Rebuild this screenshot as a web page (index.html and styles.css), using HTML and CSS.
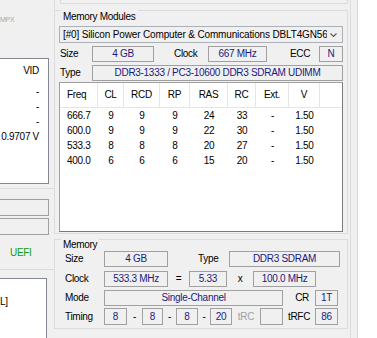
FILE: index.html
```html
<!DOCTYPE html>
<html>
<head>
<meta charset="utf-8">
<link rel="stylesheet" href="styles.css">
</head>
<body>
<div class="window">
  <div class="leftcol">
    <div class="lc-top"><span class="mpx">MPX</span></div>
    <div class="lv-left">
      <div class="lvl-head">VID</div>
      <div class="lvl-row">-</div>
      <div class="lvl-row">-</div>
      <div class="lvl-row">-</div>
      <div class="lvl-row">0.9707 V</div>
    </div>
    <div class="lc-gap"></div>
    <div class="lc-mid">
      <div class="lbox"></div>
      <div class="lbox lbox2"></div>
      <div class="uefi">UEFI</div>
    </div>
    <div class="lc-bottom">
      <div class="lv-left2">L]</div>
    </div>
  </div>

  <div class="maincol">
    <div class="topstrip"><div class="prevbox"></div></div>

    <div class="group mm">
      <div class="glabel">Memory Modules</div>
      <div class="combo">
        <span class="combo-text">[#0] Silicon Power Computer &amp; Communications DBLT4GN568</span>
        <svg class="arrow" viewBox="0 0 7 4" width="7" height="4"><path d="M0.5 0.5 L3.5 3.5 L6.5 0.5" fill="none" stroke="#5a5a5a" stroke-width="1.1"/></svg>
      </div>
      <div class="row">
        <span class="lab w33">Size</span>
        <span class="box w62">4 GB</span>
        <span class="lab clock-l">Clock</span>
        <span class="box w59">667 MHz</span>
        <span class="lab ecc-l">ECC</span>
        <span class="box w24">N</span>
      </div>
      <div class="row">
        <span class="lab w33">Type</span>
        <span class="box w251">DDR3-1333 / PC3-10600 DDR3 SDRAM UDIMM</span>
      </div>
      <div class="lv">
        <div class="lv-grid">
          <div class="lv-h f">Freq</div><div class="lv-h">CL</div><div class="lv-h">RCD</div><div class="lv-h">RP</div><div class="lv-h">RAS</div><div class="lv-h">RC</div><div class="lv-h">Ext.</div><div class="lv-h">V</div><div class="lv-h last"></div>
          <div class="lv-c f">666.7</div><div class="lv-c">9</div><div class="lv-c">9</div><div class="lv-c">9</div><div class="lv-c">24</div><div class="lv-c">33</div><div class="lv-c">-</div><div class="lv-c">1.50</div><div class="lv-c"></div>
          <div class="lv-c f">600.0</div><div class="lv-c">9</div><div class="lv-c">9</div><div class="lv-c">9</div><div class="lv-c">22</div><div class="lv-c">30</div><div class="lv-c">-</div><div class="lv-c">1.50</div><div class="lv-c"></div>
          <div class="lv-c f">533.3</div><div class="lv-c">8</div><div class="lv-c">8</div><div class="lv-c">8</div><div class="lv-c">20</div><div class="lv-c">27</div><div class="lv-c">-</div><div class="lv-c">1.50</div><div class="lv-c"></div>
          <div class="lv-c f">400.0</div><div class="lv-c">6</div><div class="lv-c">6</div><div class="lv-c">6</div><div class="lv-c">15</div><div class="lv-c">20</div><div class="lv-c">-</div><div class="lv-c">1.50</div><div class="lv-c"></div>
        </div>
      </div>
    </div>

    <div class="group mem">
      <div class="glabel mem-label">Memory</div>
      <div class="row mrow m-size">
        <span class="lab w39">Size</span>
        <span class="box w64">4 GB</span>
        <span class="lab type-l">Type</span>
        <span class="box w111">DDR3 SDRAM</span>
      </div>
      <div class="row mrow m-clock">
        <span class="lab w39">Clock</span>
        <span class="box w64">533.3 MHz</span>
        <span class="lab sym w21">=</span>
        <span class="box w38">5.33</span>
        <span class="lab sym w26">x</span>
        <span class="box w63">100.0 MHz</span>
      </div>
      <div class="row mrow m-mode">
        <span class="lab w39">Mode</span>
        <span class="box w179">Single-Channel</span>
        <span class="lab cr-l">CR</span>
        <span class="box w23">1T</span>
      </div>
      <div class="row mrow m-tim">
        <span class="lab w39">Timing</span>
        <span class="box w23">8</span>
        <span class="lab sym w15">-</span>
        <span class="box w21">8</span>
        <span class="lab sym w13">-</span>
        <span class="box w22">8</span>
        <span class="lab sym w12">-</span>
        <span class="box w22">20</span>
        <span class="lab sym w28 dis">tRC</span>
        <span class="box w23"></span>
        <span class="lab sym w32">tRFC</span>
        <span class="box w23">86</span>
      </div>
    </div>
  </div>

  <div class="edge"></div>
  <div class="outside"></div>
</div>
</body>
</html>
```

FILE: styles.css
```css
* { box-sizing: border-box; }
html, body { margin: 0; padding: 0; }
body {
  background: #f0f0f0;
  font-family: "Liberation Sans", Arial, sans-serif;
  font-size: 10px;
  letter-spacing: -0.3px;
  color: #000;
  width: 377px;
  height: 338px;
  overflow: hidden;
}
.window { display: flex; height: 338px; }

/* left column */
.leftcol { width: 54px; flex: none; display: flex; flex-direction: column; }
.lc-top { height: 62px; padding-top: 14px; }
.mpx {
  display: block; line-height: 12px;
  color: #a8a8a8; font-size: 7px; white-space: nowrap;
}
.lv-left {
  height: 136px; width: 49px; background: #fff;
  border: 1px solid #828790; border-left: none;
}
.lvl-head { height: 25px; line-height: 24px; text-align: right; padding-right: 9px; }
.lvl-row { height: 15px; line-height: 15px; text-align: right; padding-right: 9px; }
.lc-gap { height: 4px; flex: none; }
.lc-mid { height: 81px; flex: none; border-top: 1px solid #dcdcdc; padding-top: 10px; }
.lbox { width: 49px; height: 17px; border: 1px solid #a0a0a0; border-left: none; }
.lbox2 { margin-top: 2px; }
.uefi { margin-top: 12px; line-height: 12px; padding-left: 10px; color: #139a13; }
.lc-bottom { flex: 1; border-top: 1px solid #dcdcdc; padding-top: 8px; }
.lv-left2 {
  width: 47px; height: 60px; background: #fff;
  border-top: 1px solid #828790; border-right: 1px solid #828790;
  padding-top: 17px; line-height: 12px;
}

/* main column */
.maincol { width: 297px; flex: none; border-right: 1px solid #dcdcdc; }
.topstrip { height: 10px; border-left: 1px solid #dcdcdc; padding-left: 5px; }
.prevbox { width: 288px; height: 4px; border: 1px solid #dcdcdc; border-top: none; }

.group { width: 294px; border: 1px solid #dcdcdc; padding: 0 4px; }
.mm { padding-bottom: 1px; }
.glabel {
  width: max-content; margin: -1px 0 0 2px; padding: 0 2px;
  background: #f0f0f0; line-height: 13px; height: 13px;
}
.combo {
  margin-top: 3px; height: 17px; border: 1px solid #acb0b8;
  display: flex; align-items: center; background: #f0f0f0;
}
.combo-text {
  flex: 1; overflow: hidden; white-space: nowrap; padding-left: 3px;
  line-height: 15px; letter-spacing: -0.15px;
}
.arrow { width: 7px; height: 4px; margin: 0 5px 0 3px; flex: none; }

.row { display: flex; margin-top: 3px; height: 16px; line-height: 16px; }
.lab { flex: none; white-space: nowrap; }
.box {
  flex: none; border: 1px solid #a0a0a0; text-align: center;
  color: #1a1a80; white-space: nowrap; overflow: hidden; line-height: 14px;
}
.w12 { width: 12px; } .w13 { width: 13px; } .w15 { width: 15px; }
.w21 { width: 21px; } .w22 { width: 22px; } .w23 { width: 23px; }
.w24 { width: 24px; } .w26 { width: 26px; } .w28 { width: 28px; }
.w32 { width: 32px; } .w33 { width: 33px; padding-left: 1px; }
.w38 { width: 38px; } .w39 { width: 39px; } .w59 { width: 59px; }
.w62 { width: 62px; } .w63 { width: 63px; } .w64 { width: 64px; }
.w111 { width: 111px; } .w179 { width: 179px; } .w251 { width: 251px; }
.clock-l { width: 54px; padding-left: 20px; }
.ecc-l { width: 52px; padding-left: 23px; }
.type-l { width: 61px; padding-left: 30px; }
.cr-l { width: 32px; text-align: right; padding-right: 6px; }
.sym { text-align: center; }
.dis { color: #a0a0a0; }

.lv {
  margin-top: 1px; height: 150px; background: #fff;
  border: 1px solid; border-color: #a0a0a0 #7a7a7a #7a7a7a #a0a0a0;
  overflow: hidden;
}
.lv-grid { display: grid; grid-template-columns: 38px 26px 36px 30px 38px 28px 33px 31px 1fr; }
.lv-h {
  height: 25px; line-height: 24px; text-align: center;
  border-bottom: 1px solid #e5e5e5; border-right: 1px solid #e5e5e5;
}
.lv-h.last { border-right: none; }
.lv-c { height: 15px; line-height: 15px; text-align: center; }
.lv-h.f, .lv-c.f { text-align: left; padding-left: 7px; }

.mem { margin-top: 5px; padding-bottom: 3px; }
.mem-label { margin-top: -2px; }
.mrow { padding-left: 6px; }
.m-size { margin-top: 0; }
.m-clock { margin-top: 4px; }
.m-mode { margin-top: 3px; }
.m-tim { margin-top: 2px; height: 17px; line-height: 17px; }
.m-tim .box { line-height: 15px; }

.edge { width: 7px; flex: none; border-right: 1px solid #d5d5d5; }
.outside { flex: 1; background: #fff; }
```
